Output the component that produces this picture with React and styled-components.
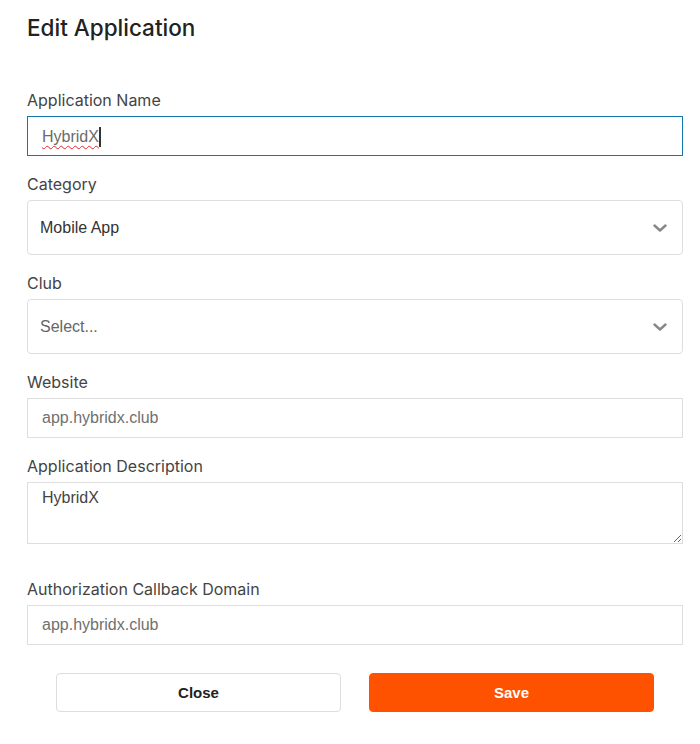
import React from 'react'
import styled, { createGlobalStyle } from 'styled-components';

const GlobalStyle = createGlobalStyle`
    * { box-sizing: border-box; }
    body {
        margin: 0;
        background: #fff;
        font-family: "Liberation Sans", Arial, sans-serif;
    }
`;

const Chevron = () => (
    <svg width="14" height="8" viewBox="0 0 14 8" fill="none">
        <polyline points="1.5,1.5 7,6.5 12.5,1.5" stroke="#888" strokeWidth="2.4" strokeLinecap="round" strokeLinejoin="round" />
    </svg>
)

const App = () => {
    return (
        <Page>
            <GlobalStyle />
            <Title>Edit Application</Title>
            <Form>
                <Group>
                    <Label>Application Name</Label>
                    <FocusedField>
                        <Misspelled>HybridX</Misspelled>
                        <Caret />
                    </FocusedField>
                </Group>
                <Group>
                    <Label>Category</Label>
                    <Select>
                        <span>Mobile App</span>
                        <Chevron />
                    </Select>
                </Group>
                <Group>
                    <Label>Club</Label>
                    <Select placeholder>
                        <span>Select...</span>
                        <Chevron />
                    </Select>
                </Group>
                <Group>
                    <Label>Website</Label>
                    <Input readOnly value="app.hybridx.club" />
                </Group>
                <Group wide>
                    <Label>Application Description</Label>
                    <TextArea readOnly value="HybridX" />
                </Group>
                <Group>
                    <Label>Authorization Callback Domain</Label>
                    <Input readOnly value="app.hybridx.club" />
                </Group>
            </Form>
            <Actions>
                <Button>Close</Button>
                <Button primary>Save</Button>
            </Actions>
        </Page>
    )
}

const Page = styled.div`
    width: 700px;
    padding: 14px 17px 0 27px;
`;

const Title = styled.h1`
    margin: 0 0 49px;
    color: #222;
    font-family: Inter, "Liberation Sans", sans-serif;
    font-size: 22.5px;
    font-weight: 500;
    line-height: 28px;
`;

const Form = styled.div`
    display: flex;
    flex-direction: column;
`;

const Group = styled.div`
    display: flex;
    flex-direction: column;
    margin-bottom: ${p => (p.wide ? '36px' : '19px')};
    &:last-child { margin-bottom: 28px; }
`;

const Label = styled.label`
    margin-bottom: 7px;
    color: #444;
    font-family: Inter, "Liberation Sans", sans-serif;
    font-size: 16px;
    font-weight: 400;
    line-height: 18px;
`;

const Input = styled.input`
    width: 100%;
    height: 40px;
    padding: 0 14px;
    border: 1px solid #dedede;
    border-radius: 0;
    outline: none;
    color: #707070;
    font-family: "Liberation Sans", Arial, sans-serif;
    font-size: 16px;
`;

const FocusedField = styled.div`
    display: flex;
    align-items: center;
    height: 40px;
    padding: 2px 14px 0;
    border: 1px solid #1179b0;
    color: #6b6b6b;
    font-size: 16px;
    line-height: 18px;
`;

const Misspelled = styled.span`
    text-decoration: underline wavy #e8262b;
    text-decoration-thickness: 1px;
    text-underline-offset: 3px;
`;

const Caret = styled.span`
    display: inline-block;
    width: 2px;
    height: 20px;
    background: #333;
`;

const Select = styled.div`
    display: flex;
    align-items: center;
    justify-content: space-between;
    height: 55px;
    padding: 0 15px 0 12px;
    border: 1px solid #dedede;
    border-radius: 4px;
    color: ${p => (p.placeholder ? '#666' : '#333')};
    font-size: 16px;
`;

const TextArea = styled.textarea`
    display: block;
    width: 100%;
    height: 62px;
    padding: 6px 14px;
    border: 1px solid #dedede;
    border-radius: 0;
    outline: none;
    color: #444;
    font-family: "Liberation Sans", Arial, sans-serif;
    font-size: 16px;
    line-height: 18px;
`;

const Actions = styled.div`
    display: flex;
    gap: 28px;
    padding: 0 29px;
`;

const Button = styled.button`
    flex: 1;
    height: 39px;
    border: 1px solid ${p => (p.primary ? '#ff5200' : '#dddddd')};
    border-radius: 4px;
    background: ${p => (p.primary ? '#ff5200' : '#fff')};
    color: ${p => (p.primary ? '#fff' : '#222')};
    font-family: "Liberation Sans", Arial, sans-serif;
    font-size: 15px;
    font-weight: 700;
    cursor: pointer;
`;

export default App
